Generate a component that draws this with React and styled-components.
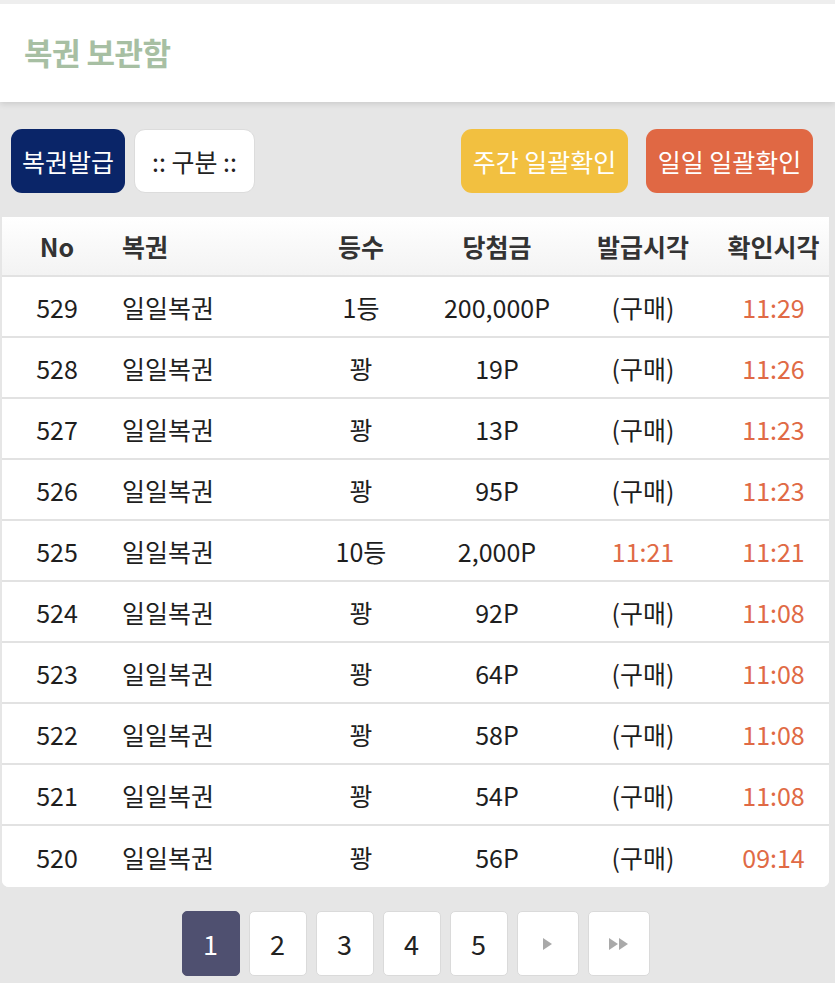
import styled, { createGlobalStyle } from 'styled-components';

const GlobalStyle = createGlobalStyle`
  html, body {
    margin: 0;
    padding: 0;
    background: #e6e6e6;
    font-family: "Noto Sans CJK KR", "Noto Sans", sans-serif;
  }
`;

const rows = [
  { no: 529, rank: '1등', prize: '200,000P', issued: '(구매)', checked: '11:29' },
  { no: 528, rank: '꽝', prize: '19P', issued: '(구매)', checked: '11:26' },
  { no: 527, rank: '꽝', prize: '13P', issued: '(구매)', checked: '11:23' },
  { no: 526, rank: '꽝', prize: '95P', issued: '(구매)', checked: '11:23' },
  { no: 525, rank: '10등', prize: '2,000P', issued: '11:21', checked: '11:21' },
  { no: 524, rank: '꽝', prize: '92P', issued: '(구매)', checked: '11:08' },
  { no: 523, rank: '꽝', prize: '64P', issued: '(구매)', checked: '11:08' },
  { no: 522, rank: '꽝', prize: '58P', issued: '(구매)', checked: '11:08' },
  { no: 521, rank: '꽝', prize: '54P', issued: '(구매)', checked: '11:08' },
  { no: 520, rank: '꽝', prize: '56P', issued: '(구매)', checked: '09:14' },
];

const Page = styled.div`
  min-height: 983px;
  background: #e6e6e6;
`;

const Header = styled.header`
  height: 94px;
  background: #fff;
  border-top: 4px solid #eeeeee;
  box-shadow: 0 2px 6px rgba(0, 0, 0, 0.12);
  display: flex;
  align-items: center;
  padding: 0 0 4px 24px;
`;

const Title = styled.h1`
  margin: 0;
  font-size: 31px;
  font-weight: 700;
  color: #a7bfa3;
  letter-spacing: -0.5px;
`;

const Toolbar = styled.div`
  display: flex;
  align-items: center;
  padding: 27px 22px 0 11px;
  gap: 9px;
`;

const Spacer = styled.div`
  flex: 1;
`;

const Button = styled.button`
  height: 64px;
  width: ${({ $w }) => $w}px;
  border-radius: 11px;
  border: ${({ $bg }) => ($bg === '#fff' ? '1px solid #dcdcdc' : 'none')};
  background: ${({ $bg }) => $bg};
  color: ${({ $color }) => $color || '#fff'};
  font-family: inherit;
  font-size: 25px;
  padding: 0;
  white-space: nowrap;
  margin-left: ${({ $ml }) => $ml || 0}px;
`;

const Table = styled.div`
  margin: 24px 6px 0 2px;
  background: #fff;
  border-radius: 0 0 7px 7px;
  overflow: hidden;
`;

const Row = styled.div`
  display: grid;
  grid-template-columns: 110px 184px 130px 142px 150px 1fr;
  box-sizing: border-box;
  height: ${({ $head }) => ($head ? 60 : 61)}px;
  align-items: center;
  border-bottom: ${({ $last }) => ($last ? 'none' : '2px solid #e2e2e2')};
  background: ${({ $head }) => ($head ? 'linear-gradient(#ffffff, #f3f3f3)' : '#fff')};
  font-size: 25px;
  font-weight: ${({ $head }) => ($head ? 700 : 400)};
  color: ${({ $head }) => ($head ? '#333' : '#1e1e1e')};
`;

const Cell = styled.div`
  text-align: ${({ $left }) => ($left ? 'left' : 'center')};
  padding-left: ${({ $left }) => ($left ? 10 : 0)}px;
  color: ${({ $time }) => ($time ? '#e06a45' : 'inherit')};
  white-space: nowrap;
`;

const Pager = styled.div`
  display: flex;
  justify-content: center;
  gap: 9px;
  padding: 24px 4px 0 0;
`;

const PageBox = styled.div`
  width: ${({ $wide }) => ($wide ? 62 : 58)}px;
  height: 65px;
  box-sizing: border-box;
  border-radius: 5px;
  border: 1px solid ${({ $active }) => ($active ? '#4f5070' : '#dadada')};
  background: ${({ $active }) => ($active ? '#4f5070' : '#fff')};
  color: ${({ $active }) => ($active ? '#fff' : '#222')};
  display: flex;
  align-items: center;
  justify-content: center;
  font-size: 27px;
`;

const Arrow = ({ double }) => (
  <svg width={double ? 20 : 10} height="12" viewBox={double ? '0 0 20 12' : '0 0 10 12'}>
    <polygon points="0,0 9,6 0,12" fill="#a9a9a9" />
    {double && <polygon points="10,0 19,6 10,12" fill="#a9a9a9" />}
  </svg>
);

const isTime = (v) => /^\d\d:\d\d$/.test(v);

export default function App() {
  return (
    <Page>
      <GlobalStyle />
      <Header>
        <Title>복권 보관함</Title>
      </Header>
      <Toolbar>
        <Button $w={114} $bg="#0a2568">복권발급</Button>
        <Button $w={121} $bg="#fff" $color="#222">:: 구분 ::</Button>
        <Spacer />
        <Button $w={167} $bg="#f2c040">주간 일괄확인</Button>
        <Button $w={167} $bg="#e06844" $ml={9}>일일 일괄확인</Button>
      </Toolbar>
      <Table>
        <Row $head>
          <Cell>No</Cell>
          <Cell $left>복권</Cell>
          <Cell>등수</Cell>
          <Cell>당첨금</Cell>
          <Cell>발급시각</Cell>
          <Cell>확인시각</Cell>
        </Row>
        {rows.map((r, i) => (
          <Row key={r.no} $last={i === rows.length - 1}>
            <Cell>{r.no}</Cell>
            <Cell $left>일일복권</Cell>
            <Cell>{r.rank}</Cell>
            <Cell>{r.prize}</Cell>
            <Cell $time={isTime(r.issued)}>{r.issued}</Cell>
            <Cell $time>{r.checked}</Cell>
          </Row>
        ))}
      </Table>
      <Pager>
        {[1, 2, 3, 4, 5].map((n) => (
          <PageBox key={n} $active={n === 1}>{n}</PageBox>
        ))}
        <PageBox $wide><Arrow /></PageBox>
        <PageBox $wide><Arrow double /></PageBox>
      </Pager>
    </Page>
  );
}
